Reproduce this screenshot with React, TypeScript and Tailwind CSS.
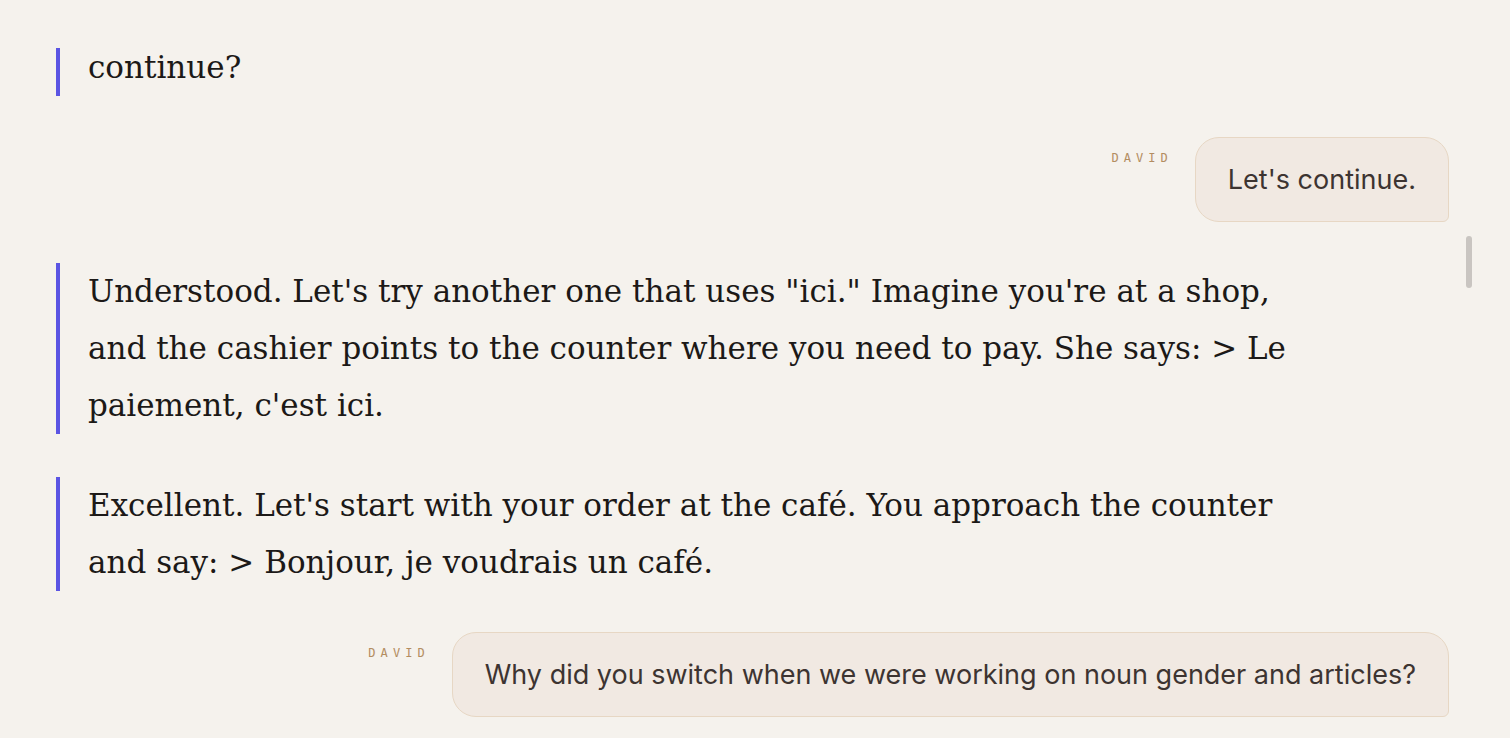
import React from 'react';

type Turn =
  | { kind: 'tutor'; lines: string[]; className?: string }
  | { kind: 'user'; name: string; text: string };

const turns: Turn[] = [
  { kind: 'tutor', lines: ['continue?'], className: '-mt-[9px]' },
  { kind: 'user', name: 'David', text: "Let's continue." },
  {
    kind: 'tutor',
    lines: [
      'Understood. Let\'s try another one that uses "ici." Imagine you\'re at a shop,',
      'and the cashier points to the counter where you need to pay. She says: > Le',
      "paiement, c'est ici.",
    ],
  },
  {
    kind: 'tutor',
    lines: [
      "Excellent. Let's start with your order at the café. You approach the counter",
      'and say: > Bonjour, je voudrais un café.',
    ],
  },
  {
    kind: 'user',
    name: 'David',
    text: 'Why did you switch when we were working on noun gender and articles?',
  },
];

const TutorMessage = ({ lines, className }: { lines: string[]; className?: string }) => (
  <div
    className={`border-l-4 border-[#5b55e3] pl-[28px] font-['DejaVu_Serif',serif] text-[31px] leading-[57px] text-[#1c1917] ${className ?? ''}`}
  >
    {lines.map((line, i) => (
      <div key={i} className="whitespace-nowrap">
        {line}
      </div>
    ))}
  </div>
);

const UserMessage = ({ name, text }: { name: string; text: string }) => (
  <div className="flex items-start justify-end gap-[22px]">
    <span className="mt-[12px] font-['DejaVu_Sans_Mono',monospace] text-[12px] font-medium uppercase tracking-[0.42em] text-[#b38d61]">
      {name}
    </span>
    <div className="rounded-[24px] rounded-br-[6px] border border-[#e7d7c4] bg-[#f1e9e2] px-[32px] py-[23px] font-['Inter',sans-serif] text-[27px] leading-[37px] text-[#3d3431]">
      {text}
    </div>
  </div>
);

export default function App() {
  return (
    <div className="relative flex h-[738px] w-full flex-col overflow-hidden bg-[#f5f2ed]">
      <div className="h-[48px] shrink-0" />
      <div className="flex-1 overflow-hidden">
        <div className="flex flex-col gap-[41px] pl-[56px] pr-[61px]">
          {turns.map((t, i) =>
            t.kind === 'tutor' ? (
              <TutorMessage
                key={i}
                lines={t.lines}
                className={`${t.className ?? ''} ${i === 3 ? 'mt-[2px]' : ''}`}
              />
            ) : (
              <UserMessage key={i} name={t.name} text={t.text} />
            ),
          )}
        </div>
      </div>
      <div className="absolute right-[38px] top-[236px] h-[52px] w-[6px] rounded-full bg-[#c9c5c1]" />
    </div>
  );
}
